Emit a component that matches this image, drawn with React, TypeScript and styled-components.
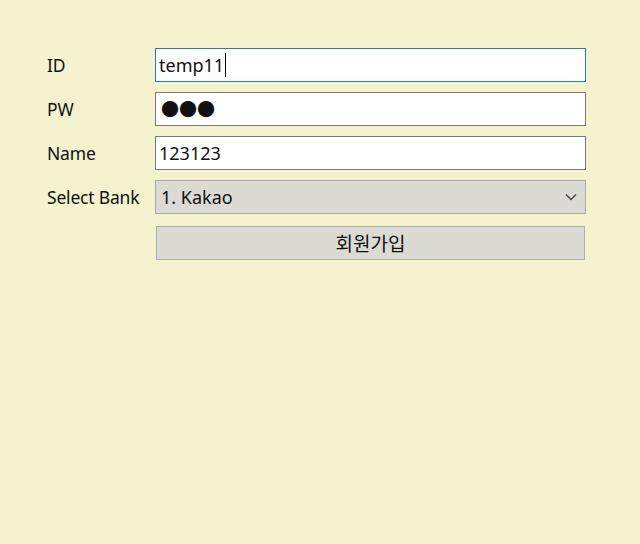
import React from 'react'
import styled, { createGlobalStyle } from 'styled-components'

const GlobalStyle = createGlobalStyle`
  html, body {
    margin: 0;
    padding: 0;
    height: 100%;
    background: #f4f2cf;
  }
  body {
    font-family: "Noto Sans", "Noto Sans CJK KR", sans-serif;
    color: #000;
  }
`

const Form = styled.div`
  display: grid;
  grid-template-columns: 108px 431px;
  grid-auto-rows: 34px;
  row-gap: 10px;
  padding: 48px 0 0 47px;
`

const Label = styled.div`
  display: flex;
  align-items: center;
  font-size: 17.5px;
  letter-spacing: -0.2px;
  white-space: nowrap;
  color: #111;
`

const Field = styled.div<{ $focused?: boolean }>`
  box-sizing: border-box;
  display: flex;
  align-items: center;
  padding: 0 3px;
  background: #ffffff;
  border: 1px solid ${p => (p.$focused ? '#1a7fd0' : '#7a7a7a')};
  font-size: 18px;
  color: #111;
`

const Caret = styled.span`
  display: inline-block;
  width: 1px;
  height: 24px;
  margin-left: 1px;
  background: #000;
`

const Dots = styled.span`
  font-size: 18px;
  margin-left: 2px;
  line-height: 1;
`

const Select = styled.div`
  box-sizing: border-box;
  display: flex;
  align-items: center;
  justify-content: space-between;
  padding: 0 8px 0 5px;
  background: #dcdbd3;
  border: 1px solid #a8a8a8;
  font-size: 18px;
  color: #111;
`

const Button = styled.div`
  box-sizing: border-box;
  grid-column: 2;
  margin: 2px 1px 0 1px;
  height: 34px;
  display: flex;
  align-items: center;
  justify-content: center;
  background: #dcdbd3;
  border: 1px solid #adadad;
  font-size: 19px;
  color: #111;
`

function App() {
  return (
    <>
      <GlobalStyle />
      <Form>
        <Label>ID</Label>
        <Field $focused>
          temp11<Caret />
        </Field>
        <Label>PW</Label>
        <Field>
          <Dots>●●●</Dots>
        </Field>
        <Label>Name</Label>
        <Field>123123</Field>
        <Label>Select Bank</Label>
        <Select>
          <span>1. Kakao</span>
          <svg width="12" height="8" viewBox="0 0 12 8">
            <polyline points="1,1.5 6,6.5 11,1.5" fill="none" stroke="#444" strokeWidth="1.4" />
          </svg>
        </Select>
        <Button>회원가입</Button>
      </Form>
    </>
  )
}

export default App
